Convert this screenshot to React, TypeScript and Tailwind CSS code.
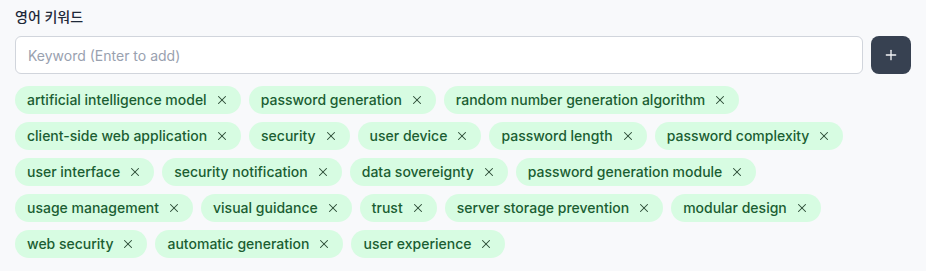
import React from "react";

const keywords = [
  "artificial intelligence model",
  "password generation",
  "random number generation algorithm",
  "client-side web application",
  "security",
  "user device",
  "password length",
  "password complexity",
  "user interface",
  "security notification",
  "data sovereignty",
  "password generation module",
  "usage management",
  "visual guidance",
  "trust",
  "server storage prevention",
  "modular design",
  "web security",
  "automatic generation",
  "user experience",
];

function XIcon() {
  return (
    <svg width="14" height="14" viewBox="0 0 24 24" fill="none" stroke="currentColor" strokeWidth="1.8" strokeLinecap="round" strokeLinejoin="round">
      <path d="M18 6 6 18" />
      <path d="m6 6 12 12" />
    </svg>
  );
}

function PlusIcon() {
  return (
    <svg width="16" height="16" viewBox="0 0 24 24" fill="none" stroke="currentColor" strokeWidth="2" strokeLinecap="round" strokeLinejoin="round">
      <path d="M5 12h14" />
      <path d="M12 5v14" />
    </svg>
  );
}

export default function App() {
  return (
    <div
      className="w-[926px] h-[271px] bg-[#f8f9fb] px-[15px] pt-[7px]"
      style={{ fontFamily: "Inter, 'Noto Sans CJK KR', sans-serif" }}
    >
      <div className="text-sm leading-5 font-medium text-gray-800 mb-[9px]">영어 키워드</div>
      <div className="flex gap-2">
        <input
          className="flex-1 h-[38px] rounded-md border border-gray-300 bg-white px-3 text-sm text-gray-900 placeholder:text-gray-400 outline-none"
          placeholder="Keyword (Enter to add)"
        />
        <button className="w-10 h-[38px] rounded-lg bg-[#374151] text-gray-100 flex items-center justify-center">
          <PlusIcon />
        </button>
      </div>
      <div className="mt-3 flex flex-wrap gap-2">
        {keywords.map((k) => (
          <span
            key={k}
            className="inline-flex items-center h-7 rounded-full bg-[#d7fce2] pl-3 pr-3 text-sm leading-5 font-medium text-[#1b5e32]"
          >
            {k}
            <span className="ml-2 text-[#2a4a35] flex items-center">
              <XIcon />
            </span>
          </span>
        ))}
      </div>
    </div>
  );
}
